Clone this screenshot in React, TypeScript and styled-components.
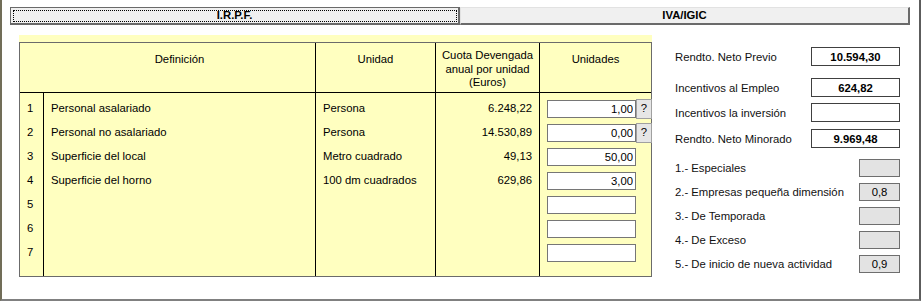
import React from 'react';
import styled, { createGlobalStyle } from 'styled-components';

const GlobalStyle = createGlobalStyle`
  html, body { margin: 0; padding: 0; background: #fff; }
  body { font-family: "Liberation Sans", Arial, sans-serif; font-size: 11.3px; color: #000; }
  * { box-sizing: border-box; }
`;

const FONT = `"Liberation Sans", Arial, sans-serif`;

const Frame = styled.div`
  width: 921px;
  height: 301px;
  border-left: 2px solid #716d58;
  border-right: 2px solid #5c5c5c;
  border-bottom: 2px solid #808080;
  background: #fff;
  display: flex;
  flex-direction: column;
`;

const TabBar = styled.div`
  display: flex;
  padding: 7px 0 0 8px;
`;

const Tab = styled.button<{ $focused?: boolean }>`
  width: 450px;
  height: 18px;
  margin: 0;
  padding: 0;
  background: #f0f0f0;
  font: bold 11.3px ${FONT};
  color: #000;
  border-style: solid;
  border-width: 1px 2px 2px 1px;
  border-color: ${p => (p.$focused ? '#6a6a6a' : '#e2e2e2 #6a6a6a #6a6a6a #e2e2e2')};
  outline: ${p => (p.$focused ? '1px dotted #000' : 'none')};
  outline-offset: -4px;
  display: flex;
  align-items: center;
  justify-content: center;
  line-height: 1;
`;

const Content = styled.div`
  display: flex;
  margin-top: 10px;
  padding-left: 17px;
`;

const YellowPanel = styled.div`
  width: 633px;
  height: 242px;
  background: #ffffc0;
  padding-top: 7px;
`;

const Table = styled.div`
  height: 235px;
  border: 1px solid #6b6b6b;
  display: flex;
  flex-direction: column;
`;

const COLS = '24px 272px 120px 104px 1fr';

const HeaderRow = styled.div`
  display: grid;
  grid-template-columns: ${COLS};
  height: 50px;
  border-bottom: 1px solid #000;
`;

const HeaderCell = styled.div<{ $padTop: number; $noBorder?: boolean }>`
  border-right: ${p => (p.$noBorder ? 'none' : '1px solid #000')};
  padding-top: ${p => p.$padTop}px;
  text-align: center;
  line-height: 13.5px;
  white-space: nowrap;
`;

const BodyGrid = styled.div`
  display: grid;
  grid-template-columns: ${COLS};
  flex: 1;
`;

const Column = styled.div<{ $noBorder?: boolean }>`
  border-right: ${p => (p.$noBorder ? 'none' : '1px solid #000')};
  padding: 3px 0 12px;
  display: flex;
  flex-direction: column;
`;

const Cell = styled.div<{ $align?: 'left' | 'right' }>`
  height: 24px;
  line-height: 24px;
  padding: 0 7px;
  white-space: nowrap;
  text-align: ${p => p.$align || 'left'};
`;

const InputCell = styled.div`
  height: 24px;
  display: flex;
  align-items: flex-start;
  padding: 4px 0 0 7px;
`;

const NumInput = styled.input`
  width: 89px;
  height: 18px;
  margin: 0;
  border: 1px solid #767676;
  background: #fff;
  text-align: right;
  padding: 0 2px 0 0;
  font: 11.3px ${FONT};
  color: #000;
  outline: none;
`;

const HelpButton = styled.button`
  width: 16px;
  height: 20px;
  margin: -1px 0 0 0;
  padding: 0;
  background: #e6e6e6;
  border: 1px solid #a0a0a0;
  font: 11.3px ${FONT};
  color: #000;
  line-height: 1;
`;

const RightPanel = styled.div`
  flex: 1;
  padding: 12px 19px 0 23px;
  display: flex;
  flex-direction: column;
`;

const InfoRow = styled.div<{ $mt: number }>`
  display: flex;
  justify-content: space-between;
  align-items: center;
  margin-top: ${p => p.$mt}px;
  white-space: nowrap;
`;

const Label = styled.span`
  color: #111;
`;

const ValueBox = styled.div`
  width: 89px;
  height: 19px;
  border: 1px solid #404040;
  background: #fff;
  font-weight: bold;
  display: flex;
  align-items: center;
  justify-content: center;
`;

const FactorBox = styled.div`
  width: 41px;
  height: 18px;
  border: 1px solid #6e6e6e;
  background: #e3e3e3;
  display: flex;
  align-items: center;
  justify-content: center;
`;

type Row = { def?: string; unit?: string; cuota?: string; val?: string; help?: boolean };

const rows: Row[] = [
  { def: 'Personal asalariado', unit: 'Persona', cuota: '6.248,22', val: '1,00', help: true },
  { def: 'Personal no asalariado', unit: 'Persona', cuota: '14.530,89', val: '0,00', help: true },
  { def: 'Superficie del local', unit: 'Metro cuadrado', cuota: '49,13', val: '50,00' },
  { def: 'Superficie del horno', unit: '100 dm cuadrados', cuota: '629,86', val: '3,00' },
  {},
  {},
  {},
];

const totals = [
  { label: 'Rendto. Neto Previo', value: '10.594,30', mt: 0 },
  { label: 'Incentivos al Empleo', value: '624,82', mt: 12 },
  { label: 'Incentivos la inversión', value: '', mt: 6 },
  { label: 'Rendto. Neto Minorado', value: '9.969,48', mt: 7 },
];

const factors = [
  { label: '1.- Especiales', value: '', mt: 11 },
  { label: '2.- Empresas pequeña dimensión', value: '0,8', mt: 6 },
  { label: '3.- De Temporada', value: '', mt: 6 },
  { label: '4.- De Exceso', value: '', mt: 6 },
  { label: '5.- De inicio de nueva actividad', value: '0,9', mt: 6 },
];

export default function App() {
  return (
    <>
      <GlobalStyle />
      <Frame>
        <TabBar>
          <Tab $focused>I.R.P.F.</Tab>
          <Tab>IVA/IGIC</Tab>
        </TabBar>
        <Content>
          <YellowPanel>
            <Table>
              <HeaderRow>
                <HeaderCell $padTop={10} $noBorder />
                <HeaderCell $padTop={10}>Definición</HeaderCell>
                <HeaderCell $padTop={10}>Unidad</HeaderCell>
                <HeaderCell $padTop={6}>
                  Cuota Devengada
                  <br />
                  anual por unidad
                  <br />
                  (Euros)
                </HeaderCell>
                <HeaderCell $padTop={10} $noBorder>
                  Unidades
                </HeaderCell>
              </HeaderRow>
              <BodyGrid>
                <Column>
                  {rows.map((_, i) => (
                    <Cell key={i}>{i + 1}</Cell>
                  ))}
                </Column>
                <Column>
                  {rows.map((r, i) => (
                    <Cell key={i}>{r.def}</Cell>
                  ))}
                </Column>
                <Column>
                  {rows.map((r, i) => (
                    <Cell key={i}>{r.unit}</Cell>
                  ))}
                </Column>
                <Column>
                  {rows.map((r, i) => (
                    <Cell key={i} $align="right">
                      {r.cuota}
                    </Cell>
                  ))}
                </Column>
                <Column $noBorder>
                  {rows.map((r, i) => (
                    <InputCell key={i}>
                      <NumInput readOnly value={r.val || ''} />
                      {r.help && <HelpButton>?</HelpButton>}
                    </InputCell>
                  ))}
                </Column>
              </BodyGrid>
            </Table>
          </YellowPanel>
          <RightPanel>
            {totals.map(t => (
              <InfoRow key={t.label} $mt={t.mt}>
                <Label>{t.label}</Label>
                <ValueBox>{t.value}</ValueBox>
              </InfoRow>
            ))}
            {factors.map(f => (
              <InfoRow key={f.label} $mt={f.mt}>
                <Label>{f.label}</Label>
                <FactorBox>{f.value}</FactorBox>
              </InfoRow>
            ))}
          </RightPanel>
        </Content>
      </Frame>
    </>
  );
}
